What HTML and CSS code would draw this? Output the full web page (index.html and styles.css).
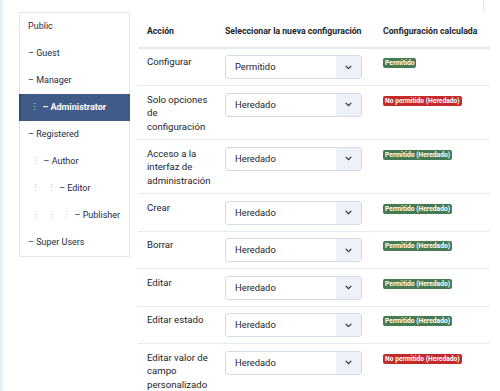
FILE: index.html
```html
<!DOCTYPE html>
<html lang="es">
<head>
<meta charset="utf-8">
<link rel="stylesheet" href="styles.css">
</head>
<body>
<div class="page">
  <div class="topline"><div class="topbox"></div></div>
  <div class="layout">
    <ul class="groups">
      <li class="item">Public</li>
      <li class="item">– Guest</li>
      <li class="item">– Manager</li>
      <li class="item active"><span class="lvl">⋮</span>– Administrator</li>
      <li class="item">– Registered</li>
      <li class="item"><span class="lvl">⋮</span>– Author</li>
      <li class="item"><span class="lvl">⋮</span><span class="lvl">⋮</span>– Editor</li>
      <li class="item"><span class="lvl">⋮</span><span class="lvl">⋮</span><span class="lvl">⋮</span>– Publisher</li>
      <li class="item">– Super Users</li>
    </ul>
    <table class="rules">
      <thead>
        <tr><th class="c1">Acción</th><th class="c2">Seleccionar la nueva configuración</th><th class="c3">Configuración calculada</th></tr>
      </thead>
      <tbody>
        <tr><td>Configurar</td><td><div class="sel"><span class="val">Permitido</span><span class="btn"><svg viewBox="0 0 10 6" width="7" height="4.5"><path d="M1 1l4 4 4-4" fill="none" stroke="#22262a" stroke-width="1.5"/></svg></span></div></td><td><span class="badge ok">Permitido</span></td></tr>
        <tr><td>Solo opciones de configuración</td><td><div class="sel"><span class="val">Heredado</span><span class="btn"><svg viewBox="0 0 10 6" width="7" height="4.5"><path d="M1 1l4 4 4-4" fill="none" stroke="#22262a" stroke-width="1.5"/></svg></span></div></td><td><span class="badge no">No permitido (Heredado)</span></td></tr>
        <tr><td>Acceso a la interfaz de administración</td><td><div class="sel"><span class="val">Heredado</span><span class="btn"><svg viewBox="0 0 10 6" width="7" height="4.5"><path d="M1 1l4 4 4-4" fill="none" stroke="#22262a" stroke-width="1.5"/></svg></span></div></td><td><span class="badge ok">Permitido (Heredado)</span></td></tr>
        <tr><td>Crear</td><td><div class="sel"><span class="val">Heredado</span><span class="btn"><svg viewBox="0 0 10 6" width="7" height="4.5"><path d="M1 1l4 4 4-4" fill="none" stroke="#22262a" stroke-width="1.5"/></svg></span></div></td><td><span class="badge ok">Permitido (Heredado)</span></td></tr>
        <tr><td>Borrar</td><td><div class="sel"><span class="val">Heredado</span><span class="btn"><svg viewBox="0 0 10 6" width="7" height="4.5"><path d="M1 1l4 4 4-4" fill="none" stroke="#22262a" stroke-width="1.5"/></svg></span></div></td><td><span class="badge ok">Permitido (Heredado)</span></td></tr>
        <tr><td>Editar</td><td><div class="sel"><span class="val">Heredado</span><span class="btn"><svg viewBox="0 0 10 6" width="7" height="4.5"><path d="M1 1l4 4 4-4" fill="none" stroke="#22262a" stroke-width="1.5"/></svg></span></div></td><td><span class="badge ok">Permitido (Heredado)</span></td></tr>
        <tr><td>Editar estado</td><td><div class="sel"><span class="val">Heredado</span><span class="btn"><svg viewBox="0 0 10 6" width="7" height="4.5"><path d="M1 1l4 4 4-4" fill="none" stroke="#22262a" stroke-width="1.5"/></svg></span></div></td><td><span class="badge ok">Permitido (Heredado)</span></td></tr>
        <tr><td>Editar valor de campo personalizado</td><td><div class="sel"><span class="val">Heredado</span><span class="btn"><svg viewBox="0 0 10 6" width="7" height="4.5"><path d="M1 1l4 4 4-4" fill="none" stroke="#22262a" stroke-width="1.5"/></svg></span></div></td><td><span class="badge no">No permitido (Heredado)</span></td></tr>
      </tbody>
    </table>
  </div>
</div>
</body>
</html>
```

FILE: styles.css
```css
html, body {
  margin: 0;
  padding: 0;
  background: #ffffff;
}
body {
  font-family: Roboto, "Liberation Sans", sans-serif;
  color: #22262a;
  overflow: hidden;
  height: 391px;
}
.page {
  border-left: 3px solid #eaf0f7;
  min-height: 391px;
  box-sizing: border-box;
}
.topline {
  height: 12px;
}
.topbox {
  width: 480px;
  height: 12px;
  border-right: 1px solid #e3e6ea;
}
.layout {
  display: flex;
  align-items: flex-start;
  gap: 8px;
  padding-left: 16px;
}
.groups {
  list-style: none;
  margin: 0;
  padding: 0;
  width: 111px;
  box-sizing: border-box;
  border: 1px solid #e4e6e9;
  flex: none;
}
.item {
  height: 27px;
  line-height: 27px;
  font-size: 9px;
  padding-left: 8px;
  color: #1b2c45;
  white-space: nowrap;
}
.item.active {
  background: #3f5c89;
  color: #ffffff;
  font-weight: 700;
  border-left: 2px solid #2e4a73;
  padding-left: 6px;
  margin-left: -1px;
  margin-right: -1px;
}
.lvl {
  display: inline-block;
  width: 15.5px;
  padding-left: 3px;
  box-sizing: border-box;
  color: #b9bec6;
  font-weight: 400;
}
.item.active .lvl {
  color: #c9d3e2;
}
.rules {
  border-collapse: collapse;
  width: 352px;
  font-size: 9.6px;
  line-height: 13.5px;
  table-layout: fixed;
}
.rules th {
  text-align: left;
  font-weight: 700;
  font-size: 8.7px;
  padding: 13px 9px 8px;
  border-bottom: 2px solid #e6e9ee;
  white-space: nowrap;
}
.rules th.c1 { width: 65px; padding-right: 4px; }
.rules th.c2 { width: 140px; }
.rules th.c3 { width: 98px; }
.rules td {
  vertical-align: top;
  padding: 6.5px 9px 6px;
  border-bottom: 1px solid #e8ebf0;
}
.rules td:first-child {
  padding-right: 4px;
}
.sel {
  display: flex;
  width: 137px;
  height: 24px;
  box-sizing: border-box;
  border: 1px solid #d3dae6;
  border-radius: 3px;
  overflow: hidden;
}
.val {
  flex: 1;
  line-height: 22px;
  padding-left: 9px;
  font-size: 9.4px;
}
.btn {
  width: 25px;
  background: #eef2f8;
  display: flex;
  align-items: center;
  justify-content: center;
}
.badge {
  display: inline-block;
  margin-top: 3px;
  font-size: 6.7px;
  line-height: 10px;
  font-weight: 700;
  color: #ffffff;
  padding: 0 2px;
  border-radius: 2px;
  white-space: nowrap;
}
.badge.ok { background: #457b52; }
.badge.no { background: #c52a2a; }
```
